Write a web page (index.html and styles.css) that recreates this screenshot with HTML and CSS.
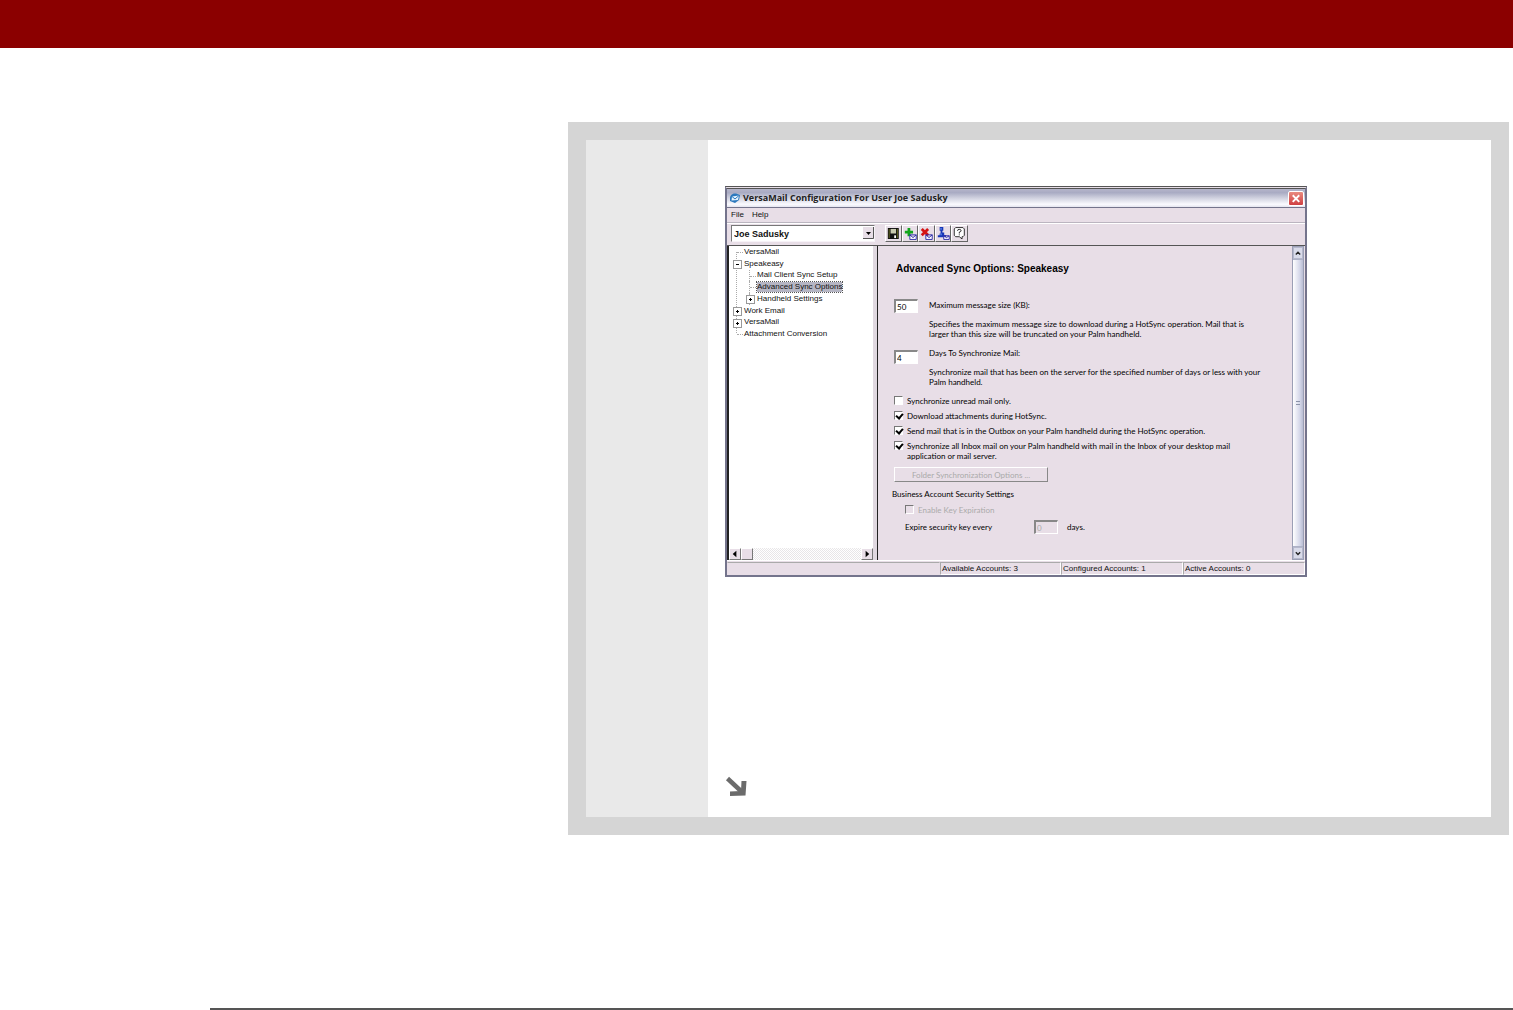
FILE: index.html
```html
<!DOCTYPE html>
<html lang="en">
<head>
<meta charset="utf-8">
<title>VersaMail Configuration</title>
<link rel="stylesheet" href="styles.css">
</head>
<body>
<header class="banner"></header>
<main class="sheet">
  <aside class="margin-column"></aside>
  <section class="content">
    <div class="window">
      <div class="titlebar">
        <svg class="app-icon" viewBox="0 0 12 10" aria-hidden="true"><path d="M1 5C1 2 4 0 7 .5L11 2 10 7 6 10 1 8Z" fill="#2b78bd"/><path d="M3 3.500L10 2.500 9 7 2.500 7.500Z" fill="#e4f3ff"/><path d="M3 3.500L6 6 10 2.500" fill="none" stroke="#2b78bd"/></svg>
        <h1 class="title">VersaMail Configuration For User Joe Sadusky</h1>
        <button class="close" type="button" aria-label="Close"><svg viewBox="0 0 15 14"><path d="M4 3.500L11 10.500M11 3.500L4 10.500" stroke="#fff" stroke-width="2"/></svg></button>
      </div>
      <nav class="menu"><button type="button">File</button><button type="button">Help</button></nav>
      <div class="toolbar">
        <div class="combo">
          <select class="user" aria-label="User"><option>Joe Sadusky</option></select>
          <svg class="combo-arrow" viewBox="0 0 11 12" aria-hidden="true"><path d="M0 0H11V12H0Z" fill="#e8dee7"/><path d="M10.500 0V11.500H0" fill="none" stroke="#555"/><path d="M3 5H8L5.500 8Z" fill="#000"/></svg>
        </div>
        <div class="tools">
          <button type="button" aria-label="Save"><svg viewBox="0 0 16 16"><path d="M2 2H14V14H2Z" fill="#111"/><path d="M5 3H11V8H5Z" fill="#c8cab0"/><path d="M3.500 3V13M12.500 3V13" stroke="#686b20"/><path d="M9 10H11V13H9Z" fill="#fff"/></svg></button>
          <button type="button" aria-label="Add account"><svg viewBox="0 0 16 16"><path d="M5 2H8V5H11V8H8V11H5V8H2V5H5Z" fill="#12a51c"/><path d="M7.500 9.500H14.500V14.500H7.500ZL11 12.500 14.500 9.500" fill="#fff" stroke="#2626a6"/></svg></button>
          <button type="button" aria-label="Delete account"><svg viewBox="0 0 16 16"><path d="M3 3L10 10M10 3L3 10" stroke="#d51212" stroke-width="3"/><path d="M7.500 9.500H14.500V14.500H7.500ZL11 12.500 14.500 9.500" fill="#fff" stroke="#2626a6"/></svg></button>
          <button type="button" aria-label="Account user"><svg viewBox="0 0 16 16"><path d="M4 1H8V5H7V7H9V10H11V12H2V10H4V8H5V5H4Z" fill="#1738b8"/><path d="M5 2H6V4H5ZM5 8H6V10H5Z" fill="#8fb5ff"/><path d="M8.500 10.500H14.500V14.500H8.500ZL11.500 12.500 14.500 10.500" fill="#fff" stroke="#2626a6"/></svg></button>
          <button type="button" aria-label="Help"><svg viewBox="0 0 16 16"><path d="M4 1.500H12L13.500 3V10L12 11.500H11V14L8 11.500H4L2.500 10V3Z" fill="#fff" stroke="#222"/><path d="M6 5Q6 3.500 8 3.500T10 5Q10 6 8 6.500V8M8 9V10" fill="none" stroke="#111"/></svg></button>
        </div>
      </div>
      <div class="panes">
        <div class="tree-pane">
          <ul class="tree">
            <li class="leaf">VersaMail</li>
            <li class="node open">Speakeasy</li>
            <li class="leaf child">Mail Client Sync Setup</li>
            <li class="leaf child"><span class="selected">Advanced Sync Options</span></li>
            <li class="node child">Handheld Settings</li>
            <li class="node">Work Email</li>
            <li class="node">VersaMail</li>
            <li class="leaf">Attachment Conversion</li>
          </ul>
          <div class="hscroll">
            <button type="button" aria-label="Scroll left"><svg viewBox="0 0 11 11"><path d="M7 2V9L3 5.500Z"/></svg></button>
            <span class="hthumb"></span>
            <button class="to-end" type="button" aria-label="Scroll right"><svg viewBox="0 0 11 11"><path d="M4 2V9L8 5.500Z"/></svg></button>
          </div>
        </div>
        <form class="options">
          <h2>Advanced Sync Options: Speakeasy</h2>
          <div class="setting size">
            <input class="field" id="size" type="text" value="50">
            <div><label for="size">Maximum message size (KB):</label>
            <p>Specifies the maximum message size to download during a HotSync operation. Mail that is<br>larger than this size will be truncated on your Palm handheld.</p></div>
          </div>
          <div class="setting days">
            <input class="field" id="days" type="text" value="4">
            <div><label for="days">Days To Synchronize Mail:</label>
            <p>Synchronize mail that has been on the server for the specified number of days or less with your<br>Palm handheld.</p></div>
          </div>
          <div class="checks">
            <label><input type="checkbox">Synchronize unread mail only.</label>
            <label><input type="checkbox" checked>Download attachments during HotSync.</label>
            <label><input type="checkbox" checked>Send mail that is in the Outbox on your Palm handheld during the HotSync operation.</label>
            <label><input type="checkbox" checked><span>Synchronize all Inbox mail on your Palm handheld with mail in the Inbox of your desktop mail<br>application or mail server.</span></label>
          </div>
          <button class="folder" type="button" disabled>Folder Synchronization Options ...</button>
          <fieldset class="security">
            <legend>Business Account Security Settings</legend>
            <label class="expiration"><input type="checkbox" disabled>Enable Key Expiration</label>
            <div class="expire"><label for="expire">Expire security key every</label><input class="field" id="expire" type="text" value="0" disabled><span>days.</span></div>
          </fieldset>
        </form>
        <div class="vscroll">
          <button type="button" aria-label="Scroll up"><svg viewBox="0 0 11 12"><path d="M2.500 7.500L5.500 4.500 8.500 7.500" fill="none" stroke="#222" stroke-width="2"/></svg></button>
          <span class="vthumb"><i></i></span>
          <button type="button" aria-label="Scroll down"><svg viewBox="0 0 11 12"><path d="M2.500 4.500L5.500 7.500 8.500 4.500" fill="none" stroke="#222" stroke-width="2"/></svg></button>
        </div>
      </div>
      <footer class="status"><span></span><span>Available Accounts: 3</span><span>Configured Accounts: 1</span><span>Active Accounts: 0</span></footer>
    </div>
    <svg class="arrow" viewBox="0 0 22 21" aria-hidden="true"><path d="M2.500 2.500L17 16" stroke="#6b6b6b" stroke-width="4.500"/><path d="M16.500 5H21.500L20.500 19.500 5 20V15.500L16 15Z" fill="#6b6b6b"/></svg>
  </section>
</main>
<hr class="page-rule">
</body>
</html>
```
FILE: styles.css
```css
* { box-sizing: border-box; }
body {
  margin: 0;
  background: #fff;
  color: #111;
  font: 8px/10px "Liberation Sans", Arial, sans-serif;
}
button, input, select { font: inherit; color: inherit; margin: 0; padding: 0; border-radius: 0; }
svg { display: block; }
h1, h2, p, ul { margin: 0; padding: 0; }

.banner { height: 48px; background: #8b0000; }
.sheet {
  margin: 74px 4px 0 568px;
  border: 18px solid #d5d5d5;
  display: grid;
  grid-template-columns: 122px 1fr;
}
.margin-column { background: #e9e9e9; }
.content { padding: 46px 17px 20px; }
.arrow { width: 22px; height: 21px; margin-top: 199px; }
.page-rule { margin: 173px 0 0 210px; border: 0; height: 2px; background: #555; }

.window {
  max-width: 582px;
  background: #e8dee7;
  border: 2px solid #74748c;
  border-top: 3px double #555;
}
.titlebar {
  height: 19px;
  padding: 0 1px 0 2px;
  display: flex;
  align-items: center;
  gap: 2px;
  background: linear-gradient(#b5b5ca, #a9abc3 20%, #d0d1df 50%, #fafaff 85%, #e5e5ef);
  border-bottom: 1px solid #74748c;
}
.app-icon { width: 12px; height: 10px; }
.title { flex: 1; font: bold 9px/12px "Open Sans", sans-serif; color: #222; }
.close { width: 16px; height: 15px; border: 1px solid #fff; border-radius: 2px; background: linear-gradient(#e98b80, #cf3f42); }
.menu { height: 15px; display: flex; gap: 8px; padding: 0 4px; border-bottom: 1px solid #bbb5c0; }
.menu button { border: 0; background: none; }
.toolbar { height: 22px; border-top: 1px solid #fff; display: flex; gap: 10px; padding: 1px 4px; }
.combo { position: relative; width: 144px; height: 17px; }
.user {
  appearance: none;
  width: 100%;
  height: 17px;
  padding: 0 2px;
  font: bold 9px/12px "Liberation Sans", Arial, sans-serif;
  background: #fff;
  border: 1px solid #777;
  border-right-color: #f7f2f7;
  border-bottom-color: #f7f2f7;
}
.combo-arrow { position: absolute; right: 1px; top: 2px; width: 11px; height: 12px; }
.tools { display: flex; width: 83px; height: 17px; }
.tools button { flex: 1; background: #e8dee7; border: 1px solid; border-color: #fff #666 #666 #fff; }
.tools svg { width: 100%; height: 100%; }

.panes { height: 315px; display: grid; grid-template-columns: 150px 1fr 13px; border-top: 1px solid #555; }
.tree-pane {
  background: #fff;
  border-left: 2px solid #222;
  border-right: 4px solid #e0d8e0;
  display: flex;
  flex-direction: column;
  justify-content: space-between;
}
.tree {
  list-style: none;
  height: 94px;
  display: grid;
  grid-auto-rows: 1fr;
  margin-left: 4px;
  background: repeating-linear-gradient(#aaa 0 1px, #fff 1px 2px) 3px 6px / 1px 82px no-repeat;
}
.tree li {
  position: relative;
  display: flex;
  align-items: center;
  padding-left: 11px;
}
.tree li.child { padding-left: 24px; }
.tree li.child::before {
  content: "";
  position: absolute;
  left: 16px;
  top: 0;
  bottom: 0;
  border-left: 1px dotted #aaa;
}
.tree li::after {
  content: "";
  position: absolute;
  left: 4px;
  width: 6px;
  top: 6px;
  border-top: 1px dotted #aaa;
}
.tree li.child::after { left: 17px; }
.tree li.node::after {
  left: 0;
  top: 2px;
  width: 7px;
  height: 7px;
  border: 1px solid #999;
  background:
    linear-gradient(#000, #000) center / 3px 1px no-repeat,
    linear-gradient(#000, #000) center / 1px 3px no-repeat,
    #fff;
}
.tree li.child.node::after { left: 13px; }
.tree li.open::after { background: linear-gradient(#000, #000) center / 3px 1px no-repeat, #fff; }
.selected { background: #b5b5c3; outline: 1px dotted #555; }
.hscroll { height: 12px; display: flex; background: repeating-conic-gradient(#e8e6e8 0 25%, #fff 0 50%) 0 0 / 2px 2px; }
.hscroll button, .hthumb { width: 12px; height: 12px; background: #e8dee7; border: 1px solid; border-color: #fff #777 #777 #fff; }
.to-end { margin-left: auto; }

.options { border-left: 1px solid #222; padding: 17px 0 0 16px; font-family: Lato, "Liberation Sans", sans-serif; color: #000; }
.options h2 { margin-left: 2px; font: bold 10px/12px "Liberation Sans", Arial, sans-serif; }
.setting { display: grid; grid-template-columns: 24px 1fr; column-gap: 11px; align-items: start; }
.setting label { display: block; }
.setting p { margin-top: 9px; }
.size { margin-top: 24px; }
.size label { margin-top: 1px; }
.days { margin-top: 9px; }
.days .field { margin-top: 2px; }
.field { width: 24px; height: 14px; padding: 0 1px; background: #fff; border: 1px solid; border-width: 2px 1px 1px 2px; border-color: #888 #fff #fff #888; }
.field:disabled { background: #e8dee7; color: #aaa; }
.checks { margin-top: 9px; display: grid; gap: 5px; }
.checks label, .expiration { display: flex; gap: 4px; }
input[type="checkbox"] { appearance: none; flex: none; width: 9px; height: 9px; background: #fff; border: 1px solid; border-color: #777 #fff #fff #777; }
input[type="checkbox"]:checked { position: relative; }
input[type="checkbox"]:checked::after { content: ""; position: absolute; left: 2px; top: 0; width: 3px; height: 5px; border: solid #000; border-width: 0 2px 2px 0; transform: rotate(40deg); }
input[type="checkbox"]:disabled { background: #e8dee7; }
.folder { display: block; width: 154px; height: 15px; margin-top: 6px; color: #aaa; background: #e8dee7; border: 1px solid; border-color: #fff #888 #888 #fff; }
.security { border: 0; padding: 0; margin: 7px 0 0 -2px; min-width: 0; }
.security legend { padding: 0; }
.expiration { margin: 6px 0 0 13px; color: #aaa; }
.expire { display: grid; grid-template-columns: 129px 24px 1fr; margin: 5px 0 0 13px; align-items: center; }
.expire span { margin-left: 9px; }

.vscroll { display: flex; flex-direction: column; width: 12px; border: 1px solid #9b9fb5; background: #fff; }
.vscroll button { height: 12px; background: #d9dbea; border: 1px solid #b5b8cc; }
.vthumb { flex: 1; display: grid; place-items: center; background: linear-gradient(90deg, #fff, #d3d6e8 70%, #b9bdd3); border: 1px solid #aeb2c7; border-width: 1px 0; }
.vthumb i { width: 4px; height: 4px; border: solid #8b93a8; border-width: 1px 0; }
.status { display: grid; grid-template-columns: 213px 121px 122px 1fr; height: 15px; padding-top: 1px; border-top: 1px solid #fff; }
.status span { padding: 0 1px; border: 1px solid; border-color: #aaa #fff #fff #aaa; line-height: 11px; }
.status span:first-child { border-color: #aaa transparent transparent; }
```
